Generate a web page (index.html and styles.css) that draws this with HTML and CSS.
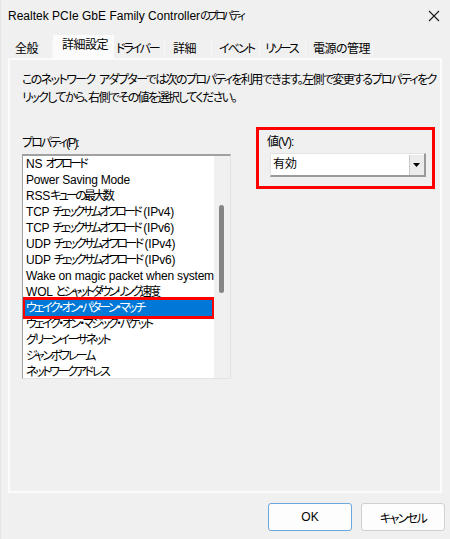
FILE: index.html
```html
<!DOCTYPE html>
<html lang="ja">
<head>
    <meta charset="UTF-8">
    <meta name="viewport" content="width=device-width, initial-scale=1.0">
    <title>Realtek PCIe GbE Family Controllerのプロパティ</title>
    <link rel="stylesheet" href="styles.css">
</head>
<body>
    <div class="window">
        <div class="titlebar">
            <span class="title">Realtek PCIe GbE Family Controller<span class="title-ja">のプロパティ</span></span>
            <svg class="close" width="12" height="12" viewBox="0 0 12 12">
                <path d="M1 1 L11 11 M11 1 L1 11" stroke="#1a1a1a" stroke-width="1.1" fill="none"/>
            </svg>
        </div>

        <div class="tabs">
            <div class="tab tab-general">全般</div>
            <div class="tab active">詳細設定</div>
            <div class="tab tab-driver">ドライバー</div>
            <div class="tab tab-details">詳細</div>
            <div class="tab tab-events">イベント</div>
            <div class="tab tab-resources">リソース</div>
            <div class="tab tab-power">電源の管理</div>
        </div>

        <div class="panel">
            <p class="desc">このネットワーク<span class="gap"> </span>アダプターでは次のプロパティを利用できます。左側で変更するプロパティをク<br>リックしてから、右側でその値を選択してください。</p>

            <div class="fields">
                <div class="prop-col">
                    <div class="label label-prop">プロパティ(P):</div>
                    <div class="listbox">
                        <ul class="items">
                            <li>NS <span class="jp">オフロード</span></li>
                            <li>Power Saving Mode</li>
                            <li>RSS<span class="jp">キューの最大数</span></li>
                            <li>TCP <span class="jp">チェックサムオフロード</span> (IPv4)</li>
                            <li>TCP <span class="jp">チェックサムオフロード</span> (IPv6)</li>
                            <li>UDP <span class="jp">チェックサムオフロード</span> (IPv4)</li>
                            <li>UDP <span class="jp">チェックサムオフロード</span> (IPv6)</li>
                            <li>Wake on magic packet when system</li>
                            <li>WOL <span class="jp">とシャットダウンリンク速度</span></li>
                            <li class="jp selected">ウェイク・オン・パターン・マッチ</li>
                            <li class="jp">ウェイク・オン・マジック・パケット</li>
                            <li class="jp">グリーンイーサネット</li>
                            <li class="jp">ジャンボフレーム</li>
                            <li class="jp">ネットワークアドレス</li>
                        </ul>
                        <div class="scrollbar">
                            <div class="thumb"></div>
                        </div>
                    </div>
                </div>

                <div class="value-box">
                    <div class="label label-value">値(V):</div>
                    <div class="select">
                        <span class="select-text">有効</span>
                        <span class="drop">
                            <svg width="7" height="4" viewBox="0 0 7 4"><path d="M0 0 H7 L3.5 4 Z" fill="#000"/></svg>
                        </span>
                    </div>
                </div>
            </div>
        </div>

        <div class="buttons">
            <button class="btn btn-default">OK</button>
            <button class="btn btn-cancel">キャンセル</button>
        </div>
    </div>
</body>
</html>
```

FILE: styles.css
```css
:root {
    --bg-color: #f0f0f0;
    --panel-border: #fbfbfb;
    --select-color: #0078d7;
    --mark-color: #ff0000;
    --text-color: #000;
}

* {
    box-sizing: border-box;
}

body {
    margin: 0;
    padding: 0;
    background-color: var(--bg-color);
    color: var(--text-color);
    font-family: 'Liberation Sans', 'Noto Sans CJK JP', sans-serif;
    font-size: 12px;
    font-feature-settings: "palt";
}

.window {
    width: 450px;
    height: 539px;
    border-left: 1px solid #e4e4e4;
}

.titlebar {
    height: 30px;
    padding: 0 10px 0 7px;
    display: flex;
    align-items: center;
    justify-content: space-between;
}

.title-ja {
    font-size: 11px;
    letter-spacing: -2.8px;
}

.close {
    margin-top: 1px;
}

/* tabs */
.tabs {
    height: 28px;
    margin-left: 7px;
    display: flex;
    align-items: flex-end;
}

.tab {
    height: 18px;
    line-height: 18px;
    padding-left: 7px;
    border-right: 1px solid #f7f7f7;
    white-space: nowrap;
    letter-spacing: -0.5px;
}

.tab-general { width: 45px; }
.tab-driver { width: 51px; padding-left: 2px; letter-spacing: -2.2px; }
.tab-details { width: 47px; padding-left: 8px; }
.tab-events { width: 48px; padding-left: 7px; letter-spacing: -1.9px; }
.tab-resources { width: 46px; padding-left: 5px; letter-spacing: -2.4px; }
.tab-power { width: 67px; }

.tab.active {
    width: 61px;
    height: 25px;
    line-height: 20px;
    padding-left: 9px;
    margin-bottom: -2px;
    background-color: var(--panel-border);
    position: relative;
    z-index: 1;
    border-right: none;
}

/* panel */
.panel {
    width: 434px;
    height: 435px;
    margin-left: 7px;
    border: 2px solid var(--panel-border);
    padding: 11px 12px 0 12px;
}

.desc {
    margin: 0;
    line-height: 18px;
    white-space: nowrap;
    letter-spacing: -1.6px;
}

.desc .gap {
    letter-spacing: 1px;
}

.fields {
    margin-top: 20px;
    display: flex;
    align-items: flex-start;
}

.label {
    line-height: 16px;
}

.label-prop {
    letter-spacing: -1.9px;
}

.label-value {
    letter-spacing: -1px;
}

.prop-col {
    width: 210px;
    padding-top: 8px;
}

.prop-col .label {
    margin-bottom: 3px;
}

.listbox {
    height: 225px;
    display: flex;
    background-color: #fff;
    border-top: 2px solid #a0a0a0;
    border-left: 1px solid #a0a0a0;
    border-right: 1px solid #e3e3e3;
    border-bottom: 1px solid #e3e3e3;
}

.items {
    flex: 1;
    list-style: none;
    margin: 0;
    padding: 0;
    white-space: nowrap;
    overflow: hidden;
}

.items li {
    height: 16px;
    line-height: 16px;
    padding-left: 3px;
    letter-spacing: -0.2px;
}

.items .jp {
    letter-spacing: -2.7px;
}

.items li.jp {
    letter-spacing: -2.3px;
}

.items li.selected {
    margin: 0 2px;
    padding-left: 1px;
    background-color: var(--select-color);
    color: #fff;
    outline: 3px solid var(--mark-color);
    letter-spacing: -2.4px;
}

.scrollbar {
    width: 16px;
    background-color: var(--bg-color);
    padding: 49px 0 0 5px;
}

.thumb {
    width: 5px;
    height: 88px;
    border-radius: 3px;
    background-color: #858585;
}

/* value */
.value-box {
    width: 179px;
    margin-left: 25px;
    border: 3px solid var(--mark-color);
    padding: 4px 8px 9px 11px;
}

.value-box .label {
    margin-left: -3px;
    margin-bottom: 3px;
}

.select {
    width: 156px;
    height: 24px;
    display: flex;
    align-items: stretch;
    background-color: #fff;
    border-top: 1px solid #e3e3e3;
    border-left: 1px solid #e3e3e3;
    border-right: 2px solid #9a9a9a;
    border-bottom: 2px solid #9a9a9a;
}

.select-text {
    flex: 1;
    padding-left: 2px;
    line-height: 21px;
}

.drop {
    width: 15px;
    margin: 1px 0 0 0;
    background-color: #ececec;
    border-left: 1px solid #c8c8c8;
    display: flex;
    align-items: center;
    justify-content: center;
}

/* buttons */
.buttons {
    display: flex;
    justify-content: flex-end;
    gap: 9px;
    padding: 10px 5px 0 0;
}

.btn {
    width: 84px;
    height: 28px;
    font-family: inherit;
    font-size: 12px;
    font-feature-settings: "palt";
    color: var(--text-color);
    background-color: #fdfdfd;
    border: 1px solid #d0d0d0;
    border-radius: 3px;
    padding: 0;
}

.btn-default {
    border-color: #6ba6dc;
}

.btn-cancel {
    letter-spacing: -1.6px;
}
```
